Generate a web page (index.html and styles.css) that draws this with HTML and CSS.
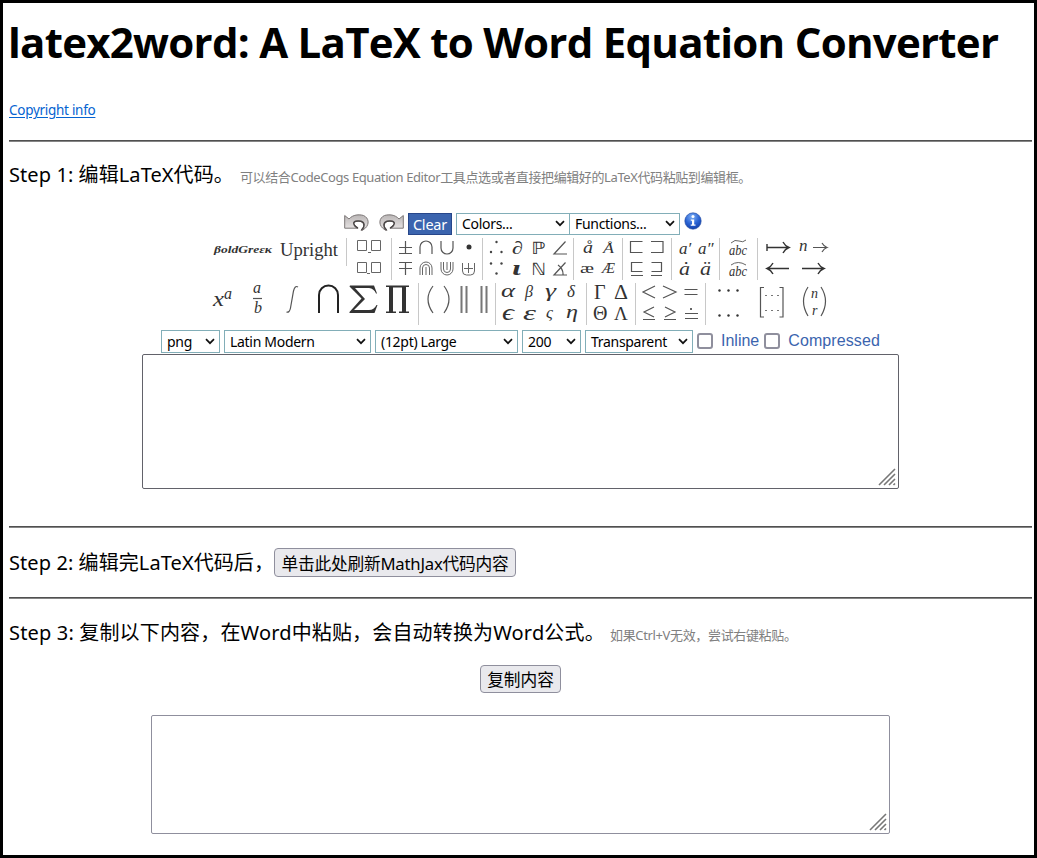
FILE: index.html
```html
<!DOCTYPE html>
<html lang="zh-CN">
<head>
<meta charset="utf-8">
<title>latex2word</title>
<link rel="stylesheet" href="styles.css">
</head>
<body>
<svg width="0" height="0" class="defs">
  <defs>
    <linearGradient id="silver" x1="0" y1="0" x2="0" y2="1"><stop offset="0" stop-color="#bab6b6"/><stop offset="1" stop-color="#ebe8e8"/></linearGradient>
    <radialGradient id="blue" cx=".45" cy=".25" r=".8"><stop offset="0" stop-color="#7eb0f5"/><stop offset=".55" stop-color="#2a63d3"/><stop offset="1" stop-color="#123da5"/></radialGradient>
    <symbol id="undo" viewBox="0 0 25 17"><path d="M.7 1.500 L5 5 C9 .5 15 .2 19.500 1.500 C25 4 25.500 10 21.500 14 L18.500 16.300 H17 C21 13 20.500 8.500 17 7.500 C13 6.300 9.500 7.500 9.500 9.500 L14 14.200 H.7 Z" fill="url(#silver)" stroke="#7c7777" stroke-width="1"/><path d="M17.500 16 C21.500 12.500 20.500 8.500 17 7.300 C13 6.300 9.500 7.500 9.800 9.500 C10 11.500 11.500 13 14 14" fill="none" stroke="#4c4848" stroke-width="1.500"/></symbol>
    <symbol id="chev" viewBox="0 0 10 7"><path d="M1 1.200 L5 5.200 L9 1.200" fill="none" stroke="#111" stroke-width="1.700"/></symbol>
    <symbol id="grip" viewBox="0 0 18 18"><path d="M1 17 L17 1 M6 17 L17 6 M11 17 L17 11 M15.500 17 L17 15.500" fill="none" stroke="#777" stroke-width="1.600"/></symbol>
  </defs>
</svg>
<main class="page">
  <h1 class="title"><span>latex2word: A LaTeX to Word Equation Converter</span></h1>
  <p class="copyright"><a href="#">Copyright info</a></p>
  <hr class="rule">
  <section class="step step-one">
    <span class="step-text s1">Step 1: 编辑LaTeX代码。</span><span class="hint h1">可以结合CodeCogs Equation Editor工具点选或者直接把编辑好的LaTeX代码粘贴到编辑框。</span>
  </section>
  <div class="toolbar">
    <svg class="undo"><use href="#undo"/></svg>
    <svg class="undo redo"><use href="#undo"/></svg>
    <span class="clear">Clear</span>
    <span class="select colors">Colors...<svg class="chev"><use href="#chev"/></svg></span>
    <span class="select functions">Functions...<svg class="chev"><use href="#chev"/></svg></span>
    <svg class="info" viewBox="0 0 18 18"><circle cx="9" cy="9" r="8.200" fill="url(#blue)" stroke="#2149a0" stroke-width=".6"/><circle cx="9" cy="4.600" r="1.500" fill="#fff"/><path d="M6.800 7.400H10.200V12.500H11.500V13.800H6.700V12.500H8V8.700H6.800Z" fill="#fff"/></svg>
  </div>
  <div class="palette">
    <svg width="137" height="44" viewBox="210 237 137 44">
      <text x="214" y="253" class="bi" font-size="11" textLength="58" lengthAdjust="spacingAndGlyphs">βoldGreεκ</text>
      <text x="280" y="256" font-size="18" textLength="58" lengthAdjust="spacingAndGlyphs">Upright</text>
      <path class="sep" d="M346.500 238V266"/>
    </svg>
    <svg width="45" height="44" viewBox="347 237 45 44">
      <path class="thin" d="M357.500 240.500h9v10h-9zM371.500 240.500h9v10h-9zM357.500 262.500h9v10h-9zM371.500 262.500h9v10h-9zM368 252.500h3M367 273.500h3"/>
      <path class="sep" d="M391.500 238V280"/>
    </svg>
    <svg width="91" height="44" viewBox="392 237 91 44">
      <path class="line" d="M399 247.500h13M405.500 241v12M399 253.500h13M420 254v-7a6 6 0 0 1 12 0v7M441 241v7a6 6 0 0 0 12 0v-7M399 262.500h13M399 268.500h13M405.500 263v12"/>
      <path class="thin" d="M420 275v-7a6 6 0 0 1 12 0v7M422.500 275v-7a3.500 3.500 0 0 1 7 0v7M426 275v-8M441 262v7a6 6 0 0 0 12 0v-7M443.500 262v7a3.500 3.500 0 0 0 7 0v-7M447 262v8M462.500 263v8q0 4 4 4h4q4 0 4-4v-8M464 268.500h9M468.500 263v10"/>
      <circle cx="469" cy="247" r="2.500"/><path class="sep" d="M482.500 238V280"/>
    </svg>
    <svg width="91" height="44" viewBox="483 237 91 44">
      <g fill="#444"><circle cx="491" cy="252" r="1.200"/><circle cx="501.500" cy="252" r="1.200"/><circle cx="496.500" cy="242" r="1.200"/><circle cx="491" cy="263.500" r="1.200"/><circle cx="501.500" cy="263.500" r="1.200"/><circle cx="496.500" cy="273.500" r="1.200"/></g>
      <text x="512" y="254" class="i" font-size="18" textLength="11" lengthAdjust="spacingAndGlyphs">∂</text><text x="512" y="275" class="bi" font-size="20" textLength="9" lengthAdjust="spacingAndGlyphs">ι</text>
      <text x="531" y="253.500" class="bb" font-size="17" textLength="14" lengthAdjust="spacingAndGlyphs">ℙ</text><text x="531" y="274.500" class="bb" font-size="17" textLength="15" lengthAdjust="spacingAndGlyphs">ℕ</text>
      <path class="line" d="M565.500 241.500L554 254H567M565.500 262.500L554 275H567M558 265q5.500 4 5 10"/>
      <path class="sep" d="M573.500 238V280"/>
    </svg>
    <svg width="49" height="44" viewBox="574 237 49 44">
      <text x="583" y="253" class="i" font-size="16" textLength="10" lengthAdjust="spacingAndGlyphs">å</text><text x="603" y="253" class="i" font-size="14" textLength="11" lengthAdjust="spacingAndGlyphs">Å</text><text x="580" y="273" font-size="14" textLength="14" lengthAdjust="spacingAndGlyphs">æ</text><text x="602" y="273" font-size="14" class="i" textLength="13" lengthAdjust="spacingAndGlyphs">Æ</text>
      <path class="sep" d="M622.500 238V280"/>
    </svg>
    <svg width="49" height="44" viewBox="623 237 49 44">
      <path class="line" d="M642.500 241.500h-12v11h12M651 241.500h12v11h-12M642.500 262.500h-11v9h11M651.500 262.500h10v9h-10M631 275.500h12M651 275.500h11"/>
      <path class="sep" d="M671.500 238V280"/>
    </svg>
    <svg width="48" height="44" viewBox="672 237 48 44">
      <text x="679" y="254" class="i" font-size="17">a′</text><text x="698" y="254" class="i" font-size="17">a″</text><text x="679" y="275" class="i" font-size="19" textLength="11" lengthAdjust="spacingAndGlyphs">ȧ</text><text x="700" y="275" class="i" font-size="19" textLength="11" lengthAdjust="spacingAndGlyphs">ä</text>
      <path class="sep" d="M719.500 238V280"/>
    </svg>
    <svg width="38" height="44" viewBox="720 237 38 44">
      <path class="thin" d="M731 243q4-4 8-2t7-1M731 265q7-5 15 0"/><text x="729" y="254.500" class="i" font-size="14" textLength="18" lengthAdjust="spacingAndGlyphs">abc</text><text x="729" y="275.500" class="i" font-size="14" textLength="18" lengthAdjust="spacingAndGlyphs">abc</text>
      <path class="sep" d="M757.500 238V280"/>
    </svg>
    <svg width="75" height="44" viewBox="758 237 75 44">
      <path class="arrow" d="M767 244v7M767 247.500h21M783 242q2 4 6 5.500q-4 1.500-6 5.500M789 268.500h-21M773 263q-2 4-6 5.500q4 1.500 6 5.500M802 268.500h21M818 263q2 4 6 5.500q-4 1.500-6 5.500"/>
      <path class="line" d="M813 247.500h13M822 243q2 3.500 5 4.500q-3 1-5 4.500"/><text x="799" y="251" class="i" font-size="17">n</text>
    </svg>
  </div>
  <div class="palette lower">
    <svg width="209" height="46" viewBox="210 281 209 46">
      <text x="213" y="306" class="i" font-size="20" textLength="11" lengthAdjust="spacingAndGlyphs">x</text><text x="224" y="299" class="i" font-size="16">a</text>
      <text x="253" y="293" class="i" font-size="16">a</text><text x="254" y="313" class="i" font-size="16">b</text><path class="line" d="M253 298.500h9"/>
      <path class="line" d="M298 287q-3-2-4.500 4l-3 17q-1 5-4 4"/>
      <path class="heavy" d="M319 313v-18a9.500 9.500 0 0 1 19 0v18"/>
      <path d="M350 285.500h24l3 8h-1q-2-5-7-5.500h-14l10 11-11 11h15q5 0 7.500-5h1l-3 8h-25v-1l12-13.500-12-12zM386 285.500h23v1.500h-3v24.500h3v1.500h-10v-1.500h3v-24h-9v24h3v1.500h-10v-1.500h3v-24.500h-3z"/>
      <path class="sep" d="M418.500 283V325"/>
    </svg>
    <svg width="77" height="46" viewBox="419 281 77 46">
      <path class="line" d="M433 286q-10 13 0 27M444 286q10 13 0 27"/><path class="bars" d="M461.500 286v27M466.500 286v27M481.500 286v27M486.500 286v27"/>
      <path class="sep" d="M495.500 283V325"/>
    </svg>
    <svg width="91" height="46" viewBox="496 281 91 46" class="greek">
      <text x="501" y="297" textLength="14" lengthAdjust="spacingAndGlyphs">α</text><text x="525" y="297" font-size="16">β</text><text x="545" y="297" textLength="11" lengthAdjust="spacingAndGlyphs">γ</text><text x="567" y="297" font-size="17">δ</text>
      <text x="502" y="320" font-size="23" textLength="12" lengthAdjust="spacingAndGlyphs">ϵ</text><text x="523" y="320" font-size="21" textLength="13" lengthAdjust="spacingAndGlyphs">ε</text><text x="546" y="318" font-size="17">ς</text><text x="566" y="318" textLength="12" lengthAdjust="spacingAndGlyphs">η</text>
      <path class="sep" d="M586.500 283V325"/>
    </svg>
    <svg width="49" height="46" viewBox="587 281 49 46">
      <text x="594" y="299" font-size="20">Γ</text><text x="614" y="299" font-size="20" textLength="14" lengthAdjust="spacingAndGlyphs">Δ</text><text x="593" y="320" font-size="20">Θ</text><text x="614" y="320" font-size="19">Λ</text>
      <path class="sep" d="M635.500 283V325"/>
    </svg>
    <svg width="70" height="46" viewBox="636 281 70 46">
      <path class="line" d="M655 286l-12 6 12 6M663 286l13 6-13 6M684.500 289.500h13M684.500 294.500h13M654 307l-10 5 10 5M665 307l10 5-10 5M643 319.500h12M664 319.500h12M685 313.500h13M685 318.500h13"/><circle cx="691" cy="309" r="1"/>
      <path class="sep" d="M705.500 283V325"/>
    </svg>
    <svg width="127" height="46" viewBox="706 281 127 46">
      <g fill="#333"><circle cx="719.500" cy="290.500" r="1.200"/><circle cx="728.500" cy="290.500" r="1.200"/><circle cx="737.500" cy="290.500" r="1.200"/><circle cx="719.500" cy="315.500" r="1.200"/><circle cx="728.500" cy="315.500" r="1.200"/><circle cx="737.500" cy="315.500" r="1.200"/></g>
      <path class="line" d="M764 287.500h-3.500v29.500h3.500M779.500 287.500h3.500v29.500h-3.500M808 287q-9 14 0 29M821 287q9 14 0 29"/>
      <path class="dots" d="M765 295.500h14M765 310.500h14"/>
      <text x="811" y="298" class="i" font-size="14">n</text><text x="812" y="315" class="i" font-size="14">r</text>
    </svg>
  </div>
  <div class="options">
    <span class="select w59">png<svg class="chev"><use href="#chev"/></svg></span>
    <span class="select w147">Latin Modern<svg class="chev"><use href="#chev"/></svg></span>
    <span class="select w143">(12pt) Large<svg class="chev"><use href="#chev"/></svg></span>
    <span class="select w59">200<svg class="chev"><use href="#chev"/></svg></span>
    <span class="select w108">Transparent<svg class="chev"><use href="#chev"/></svg></span>
    <label class="check"><i class="box"></i>Inline</label>
    <label class="check compressed"><i class="box"></i>Compressed</label>
  </div>
  <div class="area editor"><svg class="grip"><use href="#grip"/></svg></div>
  <hr class="rule">
  <section class="step step-two">
    <span class="step-text s2">Step 2: 编辑完LaTeX代码后，</span><span class="button refresh"><span>单击此处刷新MathJax代码内容</span></span>
  </section>
  <hr class="rule">
  <section class="step step-three">
    <span class="step-text s3">Step 3: 复制以下内容，在Word中粘贴，会自动转换为Word公式。</span><span class="hint h3">如果Ctrl+V无效，尝试右键粘贴。</span>
  </section>
  <span class="button copy"><span>复制内容</span></span>
  <div class="area output"><svg class="grip"><use href="#grip"/></svg></div>
</main>
</body>
</html>
```
FILE: styles.css
```css
* { box-sizing: border-box; }
body { margin: 0; background: #fff; color: #000; font-family: "Noto Sans", "Noto Sans CJK SC", sans-serif; }
svg { display: block; flex: none; }
.defs { position: absolute; }
.page { width: 1037px; height: 858px; border: 3px solid #000; padding: 0 2px 0 6px; display: flex; flex-direction: column; overflow: hidden; }
.page > * { flex: none; }
.title { margin: 0; height: 80px; line-height: 78px; font-size: 42px; font-weight: 700; font-family: "Open Sans", sans-serif; letter-spacing: -.74px; text-indent: -1px; white-space: nowrap; }
.copyright { margin: 0; height: 57px; line-height: 55px; font-size: 13.500px; letter-spacing: -.28px; }
.copyright a { color: #0563d1; text-underline-offset: 2px; }
.rule { margin: 0; width: 1023px; height: 2px; border: 0; border-top: 1px solid #505050; border-bottom: 1px solid #858585; }
.step { display: flex; align-items: center; white-space: nowrap; }
.step-one { height: 68px; padding-bottom: 3px; }
.step-two { height: 69px; }
.step-three { height: 66px; }
.step-text { font-size: 20px; letter-spacing: .08px; padding-bottom: 2px; }
.hint { color: #808080; font-size: 13px; padding-top: 4px; }
.h1 { letter-spacing: -.4px; }
.h3 { letter-spacing: -.35px; }
.s1 { width: 231px; }
.s2 { width: 265px; }
.s3 { width: 601px; letter-spacing: .16px; }
.toolbar { height: 27px; padding: 3px 0 0 335px; display: flex; }
.undo { width: 25px; height: 17px; margin-top: 1px; }
.redo { margin: 1px 4px 0 10px; transform: scaleX(-1); }
.clear { width: 44px; height: 22px; background: #3b64ae; border: 1px solid #27468a; color: #fff; font-size: 14.500px; letter-spacing: -.2px; line-height: 21px; text-align: center; margin-right: 4px; }
.select { display: flex; align-items: center; justify-content: space-between; height: 23px; border: 1px solid #82aeb8; padding: 0 4px 0 5px; font-size: 14px; letter-spacing: -.3px; white-space: nowrap; }
.toolbar .select { height: 22px; padding-bottom: 1px; }
.chev { width: 10px; height: 7px; }
.colors { width: 114px; margin-right: -1px; }
.functions { width: 111px; }
.info { width: 18px; height: 18px; margin-left: 4px; margin-top: -1px; }
.palette { display: flex; height: 44px; padding-left: 201px; font-family: "Liberation Serif", "DejaVu Serif", serif; fill: #333; }
.palette svg { overflow: visible; }
.lower { height: 46px; }
.i, .greek { font-style: italic; }
.bi { font-style: italic; font-weight: 700; }
.bb { font-family: "DejaVu Sans", sans-serif; }
.greek { font-size: 19px; }
.sep { stroke: #c8c8c8; fill: none; }
.thin { stroke: #666; fill: none; stroke-width: 1; }
.line { stroke: #555; fill: none; stroke-width: 1.200; }
.bars { stroke: #777; fill: none; stroke-width: 2; }
.arrow { stroke: #333; fill: none; stroke-width: 1.400; }
.heavy { stroke: #222; fill: none; stroke-width: 2; }
.dots { stroke: #777; fill: none; stroke-dasharray: 2 4; }
.options { height: 27px; padding: 3px 0 0 152px; display: flex; gap: 4px; }
.options .select { padding-bottom: 1px; }
.w59 { width: 59px; }
.w147 { width: 147px; }
.w143 { width: 143px; }
.w108 { width: 108px; }
.check { display: flex; align-items: center; height: 22px; font: 16px "Liberation Sans", Arial, sans-serif; color: #3b64ae; }
.compressed { margin-left: 1px; letter-spacing: .1px; }
.box { width: 16px; height: 16px; border: 2px solid #8f8f9d; border-radius: 3px; margin-right: 8px; }
.area { display: flex; align-items: flex-end; justify-content: flex-end; border: 1px solid #62626a; border-radius: 2px; padding: 2px; }
.editor { width: 757px; height: 135px; margin: 0 0 37px 133px; }
.output { width: 739px; height: 119px; margin: 22px 0 0 142px; border-color: #8f8f9d; }
.grip { width: 18px; height: 18px; }
.button { display: flex; align-items: center; justify-content: center; background: #e9e9ed; border: 1px solid #8f8f9d; border-radius: 4px; font-size: 16.700px; white-space: nowrap; }
.refresh { width: 242px; height: 29px; letter-spacing: -.2px; }
.copy { width: 81px; height: 28px; margin-left: 471px; }
```
